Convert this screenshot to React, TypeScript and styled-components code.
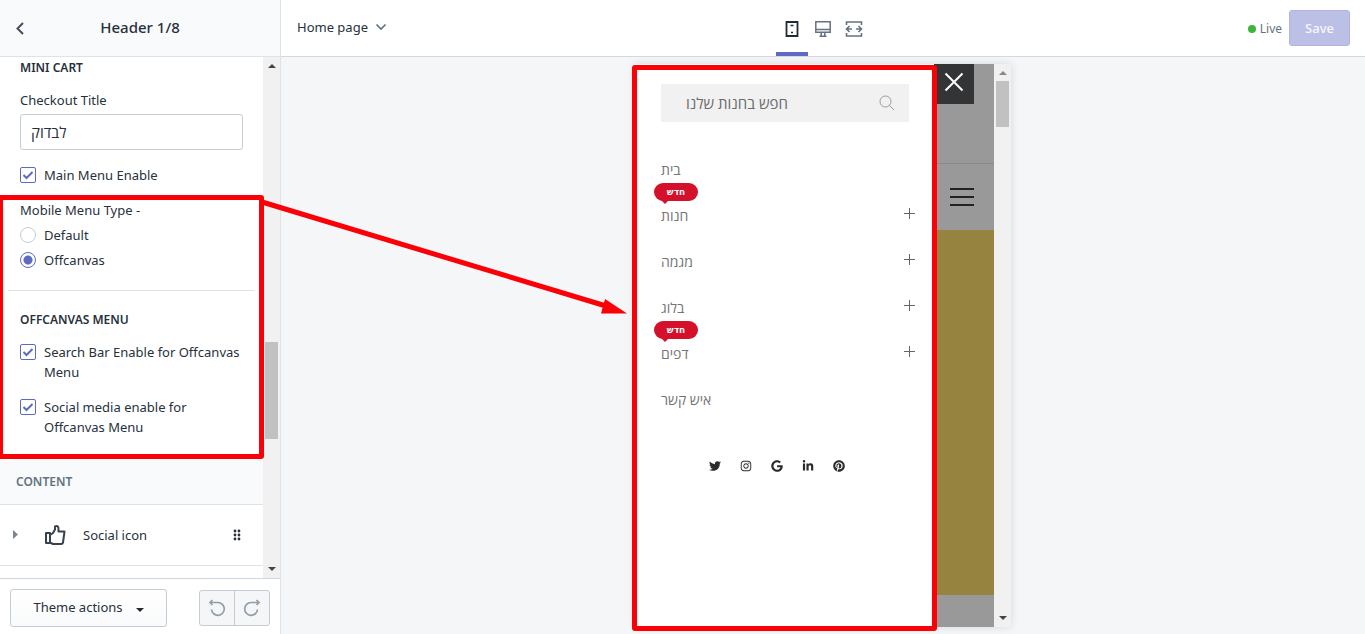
import React from 'react';
import styled, { createGlobalStyle } from 'styled-components';
import { FaTwitter, FaInstagram, FaGoogle, FaLinkedinIn, FaPinterest } from 'react-icons/fa';

const GlobalStyle = createGlobalStyle`
  *, *::before, *::after { box-sizing: border-box; }
  body {
    margin: 0;
    background: #f4f6f8;
    color: #27313c;
    font-family: 'Noto Sans', 'Open Sans', sans-serif;
    font-size: 13px;
    line-height: 20px;
  }
  button, input { font: inherit; color: inherit; margin: 0; }
  button { cursor: pointer; }
  svg { display: block; }
`;

const Shell = styled.div`
  position: relative;
  display: flex;
  height: 100vh;
  overflow: hidden;
`;

/* ---------- Sidebar ---------- */

const Sidebar = styled.aside`
  display: flex;
  flex-direction: column;
  flex: none;
  width: 281px;
  background: #fff;
  border-right: 1px solid #dfe3e8;
`;

const SidebarHeader = styled.header`
  display: grid;
  grid-template-columns: 40px 1fr 40px;
  align-items: center;
  flex: none;
  height: 57px;
  background: #f9fafb;
  border-bottom: 1px solid #dfe3e8;
`;

const SidebarTitle = styled.h1`
  margin: 0;
  padding-bottom: 2px;
  font-size: 15px;
  font-weight: 500;
  text-align: center;
`;

const BackButton = styled.button`
  display: flex;
  justify-content: center;
  padding: 4px 0;
  border: 0;
  background: none;
`;

const ScrollArea = styled.div`
  display: flex;
  flex: 1;
  min-height: 0;
  overflow: hidden;
`;

const Settings = styled.div`
  flex: 1;
  min-width: 0;
  padding-top: 1px;
`;

const Section = styled.section`
  display: flex;
  flex-direction: column;
  padding: 0 20px;
`;

const SectionTitle = styled.h2`
  margin: 0;
  font-size: 12px;
  font-weight: 600;
  line-height: 20px;
  text-transform: uppercase;
`;

const FieldLabel = styled.label`
  margin-top: 12px;
`;

const TextField = styled.input`
  width: 100%;
  height: 36px;
  margin: 4px 0 15px;
  padding: 0 10px;
  border: 1px solid #c4cdd5;
  border-radius: 3px;
  background: #fff;
  font-size: 15px;
`;

const Highlighted = styled.div`
  position: relative;
  margin-top: 15px;
  padding-bottom: 22px;
`;

const Highlight = styled.div<{ $left: number; $right: number; $top: number; $bottom: number }>`
  position: absolute;
  z-index: 2;
  top: ${(p) => p.$top}px;
  right: ${(p) => p.$right}px;
  bottom: ${(p) => p.$bottom}px;
  left: ${(p) => p.$left}px;
  border: 5px solid #fb0007;
  border-radius: 3px;
  pointer-events: none;
`;

const Choice = styled.label`
  display: flex;
  align-items: flex-start;
  gap: 8px;
`;

const ChoiceControl = styled.span`
  position: relative;
  flex: none;
  width: 16px;
  height: 16px;
  margin-top: 2px;

  svg {
    position: absolute;
    inset: 0;
    pointer-events: none;
  }
`;

const ChoiceInput = styled.input`
  display: block;
  appearance: none;
  width: 16px;
  height: 16px;
  border: 1px solid #c4cdd5;
  border-radius: ${(p) => (p.type === 'radio' ? '8px' : '2px')};
  background: #fff;

  &:checked {
    border-color: #5c6ac4;
  }
  &[type='radio']:checked {
    background: radial-gradient(circle, #5c6ac4 4px, #fff 5px);
  }
  &:not(:checked) + svg {
    display: none;
  }
`;

const RadioGroup = styled.fieldset`
  display: flex;
  flex-direction: column;
  gap: 5px;
  margin: 0;
  padding: 0;
  border: 0;

  legend {
    margin-bottom: 5px;
    padding: 0;
  }
`;

const Divider = styled.hr`
  width: calc(100% - 16px);
  margin: 20px 8px 19px;
  border: 0;
  border-top: 1px solid #dfe3e8;
`;

const ChoiceList = styled.div`
  display: flex;
  flex-direction: column;
  gap: 15px;
  margin: 12px -3px 0 0;
`;

const ContentHeading = styled.h2`
  margin: 0;
  padding: 13px 16px 12px;
  border-bottom: 1px solid #dfe3e8;
  background: #f9fafb;
  color: #637381;
  font-size: 12px;
  font-weight: 600;
  line-height: 20px;
`;

const BlockRow = styled.div`
  display: flex;
  align-items: center;
  height: 61px;
  padding: 0 20px 0 12px;
  border-bottom: 1px solid #dfe3e8;
`;

const BlockName = styled.span`
  flex: 1;
  margin-left: 17px;
`;

const IconButton = styled.button`
  display: flex;
  padding: 0;
  border: 0;
  background: none;
`;

const BlockIcon = styled.span`
  margin-left: 24px;
`;

const Scrollbar = styled.div`
  display: flex;
  flex-direction: column;
  align-items: center;
  flex: none;
  width: 17px;
  padding: 7px 0;
  background: #f1f1f1;
`;

const Thumb = styled.div<{ $before: number; $size: number }>`
  width: 13px;
  height: ${(p) => p.$size}px;
  margin-top: ${(p) => p.$before}px;
  margin-bottom: auto;
  background: #c1c1c1;
`;

const SidebarFooter = styled.footer`
  display: flex;
  align-items: center;
  justify-content: space-between;
  flex: none;
  height: 56px;
  padding: 2px 10px 0;
  border-top: 1px solid #d0d6db;
`;

const ThemeActions = styled.button`
  display: flex;
  align-items: center;
  justify-content: center;
  gap: 13px;
  width: 157px;
  height: 38px;
  padding: 0 0 2px;
  border: 1px solid #c4cdd5;
  border-radius: 3px;
  background: linear-gradient(#fff, #f9fafb);

  svg { margin-top: 6px; }
`;

const History = styled.div`
  display: flex;
  border: 1px solid #c4cdd5;
  border-radius: 3px;
  background: #f4f6f8;
`;

const HistoryButton = styled.button`
  display: flex;
  align-items: center;
  justify-content: center;
  width: 34px;
  height: 34px;
  padding: 0;
  border: 0;
  background: none;

  & + & {
    width: 35px;
    border-left: 1px solid #c4cdd5;
  }
`;

/* ---------- Editor ---------- */

const Editor = styled.main`
  display: flex;
  flex-direction: column;
  flex: 1;
  min-width: 0;
`;

const Toolbar = styled.header`
  display: grid;
  grid-template-columns: 1fr auto 1fr;
  flex: none;
  height: 57px;
  padding: 0 15px 0 16px;
  border-bottom: 1px solid #d5d9dd;
  background: #fff;
`;

const PagePicker = styled.button`
  display: flex;
  align-items: center;
  gap: 7px;
  justify-self: start;
  height: 54px;
  padding: 0;
  border: 0;
  background: none;
`;

const Devices = styled.nav`
  display: flex;
  margin-right: 2px;
`;

const DeviceButton = styled.button<{ $active?: boolean }>`
  display: flex;
  align-items: center;
  justify-content: center;
  width: ${(p) => (p.$active ? 32 : 31)}px;
  padding: 6px 0 0;
  border: 0;
  border-bottom: 4px solid ${(p) => (p.$active ? '#5c6ac4' : 'transparent')};
  background: none;
  color: ${(p) => (p.$active ? '#212b36' : '#637381')};
`;

const Actions = styled.div`
  display: flex;
  align-items: center;
  justify-content: flex-end;
  gap: 7px;
`;

const Status = styled.span`
  display: flex;
  align-items: center;
  gap: 4px;
  padding-top: 1px;
  color: #637381;
  font-size: 12px;

  &::before {
    content: '';
    width: 8px;
    height: 8px;
    border-radius: 4px;
    background: #3fb53c;
  }
`;

const SaveButton = styled.button`
  width: 61px;
  height: 36px;
  padding: 0;
  border: 1px solid #b0b4de;
  border-radius: 3px;
  background: #bcc0e6;
  color: #f7f7fd;
  font-size: 13px;
  font-weight: 500;
`;

const Stage = styled.div`
  display: flex;
  justify-content: center;
  flex: 1;
  min-height: 0;
  padding: 7px 0;
`;

const Phone = styled.div`
  position: relative;
  display: flex;
  width: 376px;
  box-shadow: 0 0 8px rgba(33, 43, 54, 0.14);
`;

const Offcanvas = styled.div`
  flex: 1;
  min-width: 0;
  padding: 20px 19px 0 26px;
  background: #fff;
  color: #747474;
  font-family: 'Open Sans', 'Noto Sans', sans-serif;
`;

const SearchBox = styled.form`
  display: flex;
  align-items: center;
  height: 38px;
  margin-right: 6px;
  padding: 0 14px 0 25px;
  background: #f1f1f1;
`;

const SearchInput = styled.input`
  flex: 1;
  min-width: 0;
  padding: 0;
  border: 0;
  background: none;
  font-size: 15px;

  &::placeholder {
    color: #6b6b6b;
    opacity: 1;
  }
`;

const Menu = styled.ul`
  margin: 25px 0 0;
  padding: 0;
  list-style: none;
`;

const MenuItem = styled.li`
  position: relative;
  display: flex;
  align-items: center;
  justify-content: space-between;
  height: 46px;
`;

const MenuLink = styled.a`
  color: inherit;
  font-size: 14px;
  text-decoration: none;
`;

const Expand = styled(IconButton)`
  margin-bottom: 6px;
`;

const Badge = styled.span`
  position: absolute;
  top: -10px;
  left: -7px;
  width: 44px;
  height: 18px;
  border-radius: 9px;
  background: #d5102b;
  color: #fff;
  font-family: 'DejaVu Sans', sans-serif;
  font-size: 9px;
  font-weight: 700;
  line-height: 18px;
  text-align: center;

  &::after {
    content: '';
    position: absolute;
    top: 17px;
    left: 7px;
    border: 4px solid transparent;
    border-top-color: #d5102b;
    border-bottom: 0;
  }
`;

const Socials = styled.nav`
  display: flex;
  justify-content: center;
  gap: 19px;
  margin: 37px 22px 0 0;
  color: #2b2b2b;

  a { color: inherit; }
`;

const Underlay = styled.div`
  display: flex;
  flex-direction: column;
  flex: none;
  width: 60px;
  background: #999;
`;

const CloseButton = styled.button`
  display: flex;
  align-items: center;
  justify-content: center;
  flex: none;
  width: 40px;
  height: 40px;
  padding: 0 0 4px;
  border: 0;
  background: #333436;
`;

const StoreBar = styled.div`
  display: flex;
  align-items: center;
  flex: none;
  height: 67px;
  margin-top: 59px;
  padding-left: 16px;
  border-top: 1px solid #8a8a8a;
`;

const Banner = styled.div`
  flex: 1;
  margin-bottom: 32px;
  background: #95833f;
`;

const Arrow = styled.svg`
  position: absolute;
  z-index: 3;
  top: 195px;
  left: 260px;
  pointer-events: none;
`;

/* ---------- Pieces ---------- */

function Caret({ up, color = '#444' }: { up?: boolean; color?: string }) {
  return (
    <svg width="8" height="4" viewBox="0 0 8 4" fill={color}>
      <path d={up ? 'M0 4 4 0l4 4z' : 'M0 0h8L4 4z'} />
    </svg>
  );
}

function Checkbox({ children }: { children: React.ReactNode }) {
  return (
    <Choice>
      <ChoiceControl>
        <ChoiceInput type="checkbox" defaultChecked />
        <svg width="16" height="16" viewBox="0 0 16 16" fill="none" stroke="#5c6ac4" strokeWidth="2">
          <path d="M3.500 8 6.500 11 12.500 5" />
        </svg>
      </ChoiceControl>
      {children}
    </Choice>
  );
}

function Radio({ label, checked }: { label: string; checked?: boolean }) {
  return (
    <Choice>
      <ChoiceControl>
        <ChoiceInput type="radio" name="mobile-menu" defaultChecked={checked} />
      </ChoiceControl>
      {label}
    </Choice>
  );
}

const menuItems = [
  { name: 'בית' },
  { name: 'חנות', badge: true, nested: true },
  { name: 'מגמה', nested: true },
  { name: 'בלוג', nested: true },
  { name: 'דפים', badge: true, nested: true },
  { name: 'איש קשר' },
];

const socials = [
  { name: 'Twitter', Icon: FaTwitter },
  { name: 'Instagram', Icon: FaInstagram },
  { name: 'Google', Icon: FaGoogle },
  { name: 'LinkedIn', Icon: FaLinkedinIn },
  { name: 'Pinterest', Icon: FaPinterest },
];

export default function App() {
  return (
    <>
      <GlobalStyle />
      <Shell>
        <Sidebar>
          <SidebarHeader>
            <BackButton aria-label="Back">
              <svg width="10" height="14" viewBox="0 0 10 14" fill="none" stroke="#454f5b" strokeWidth="2">
                <path d="M8 2 2.500 7.500 8 13" />
              </svg>
            </BackButton>
            <SidebarTitle>Header 1/8</SidebarTitle>
          </SidebarHeader>

          <ScrollArea>
            <Settings>
              <Section>
                <SectionTitle>Mini cart</SectionTitle>
                <FieldLabel htmlFor="checkout-title">Checkout Title</FieldLabel>
                <TextField id="checkout-title" defaultValue="לבדוק" />
                <Checkbox>Main Menu Enable</Checkbox>
              </Section>
              <Highlighted>
                <Highlight $top={-5} $right={-1} $bottom={0} $left={-2} />
                <Section>
                  <RadioGroup>
                    <legend>Mobile Menu Type -</legend>
                    <Radio label="Default" />
                    <Radio label="Offcanvas" checked />
                  </RadioGroup>
                </Section>
                <Divider />
                <Section>
                  <SectionTitle>Offcanvas menu</SectionTitle>
                  <ChoiceList>
                    <Checkbox>Search Bar Enable for Offcanvas Menu</Checkbox>
                    <Checkbox>Social media enable for Offcanvas Menu</Checkbox>
                  </ChoiceList>
                </Section>
              </Highlighted>
              <ContentHeading>CONTENT</ContentHeading>
              <BlockRow>
                <IconButton aria-label="Expand Social icon">
                  <svg width="8" height="10" viewBox="0 0 8 10" fill="#7b8794">
                    <path d="M1 0 6 4.500 1 9z" />
                  </svg>
                </IconButton>
                <BlockIcon>
                  <svg width="22" height="22" viewBox="0 0 22 22" fill="none" stroke="#36424e" strokeWidth="2" strokeLinejoin="round">
                    <path d="M2 9h4v10H2zM6 11l3-2 2-3.500V2.500Q14.500 1 14.500 5v2.500h6L19 18.500q-.2 1.500-2 1.500H9l-3-1.500" />
                  </svg>
                </BlockIcon>
                <BlockName>Social icon</BlockName>
                <IconButton aria-label="Reorder Social icon">
                  <svg width="12" height="12" viewBox="0 0 12 12" fill="#27313c">
                    <circle cx="4" cy="2" r="1.400" />
                    <circle cx="8" cy="2" r="1.400" />
                    <circle cx="4" cy="6" r="1.400" />
                    <circle cx="8" cy="6" r="1.400" />
                    <circle cx="4" cy="10" r="1.400" />
                    <circle cx="8" cy="10" r="1.400" />
                  </svg>
                </IconButton>
              </BlockRow>
            </Settings>
            <Scrollbar>
              <Caret up />
              <Thumb $before={274} $size={97} />
              <Caret />
            </Scrollbar>
          </ScrollArea>

          <SidebarFooter>
            <ThemeActions>
              Theme actions
              <Caret color="#212b36" />
            </ThemeActions>
            <History>
              <HistoryButton aria-label="Undo">
                <svg width="18" height="18" viewBox="0 0 18 18" fill="none" stroke="#919eab" strokeWidth="1.700">
                  <path d="M4.500 1 2 3.500 4.500 6M2 3.500H10a6.400 6.400 0 1 1-6.500 7" />
                </svg>
              </HistoryButton>
              <HistoryButton aria-label="Redo">
                <svg width="18" height="18" viewBox="0 0 18 18" fill="none" stroke="#919eab" strokeWidth="1.700">
                  <path d="M13.500 1 16 3.500 13.500 6M16 3.500H8a6.400 6.400 0 1 0 6.500 7" />
                </svg>
              </HistoryButton>
            </History>
          </SidebarFooter>
        </Sidebar>

        <Editor>
          <Toolbar>
            <PagePicker>
              Home page
              <svg width="12" height="8" viewBox="0 0 12 8" fill="none" stroke="#637381" strokeWidth="1.700">
                <path d="M1.500 1.500 6 6l4.500-4.500" />
              </svg>
            </PagePicker>
            <Devices aria-label="Preview size">
              <DeviceButton $active aria-label="Mobile">
                <svg width="14" height="16" viewBox="0 0 14 16" fill="none" stroke="currentColor" strokeWidth="1.800">
                  <path d="M1.500 1h11v14h-11z" />
                  <path d="M5.500 4.500h3M6 11.500h2" strokeWidth="1.500" />
                </svg>
              </DeviceButton>
              <DeviceButton aria-label="Desktop">
                <svg width="16" height="16" viewBox="0 0 16 16" fill="none" stroke="currentColor" strokeWidth="1.500">
                  <path d="M.8.8h14.400v10.400H.8zM.8 8.500h14.400M6.200 11.500v3.500M9.800 11.500v3.500M4.500 15.200h7" />
                </svg>
              </DeviceButton>
              <DeviceButton aria-label="Full width">
                <svg width="18" height="16" viewBox="0 0 18 16" fill="none" stroke="currentColor" strokeWidth="1.600">
                  <path d="M1.500 4V1h15v3M1.500 12v3h15v-3M1.500 8H7M11 8h5.500M4.500 5 1.500 8l3 3M13.500 5l3 3-3 3" />
                </svg>
              </DeviceButton>
            </Devices>
            <Actions>
              <Status>Live</Status>
              <SaveButton>Save</SaveButton>
            </Actions>
          </Toolbar>

          <Stage>
            <Phone>
              <Offcanvas>
                <SearchBox role="search">
                  <SearchInput aria-label="חפש" placeholder="חפש בחנות שלנו" />
                  <IconButton type="button" aria-label="Search">
                    <svg width="16" height="16" viewBox="0 0 16 16" fill="none" stroke="#999">
                      <circle cx="6.500" cy="6.500" r="5.500" />
                      <path d="m10.500 10.500 4.500 4.500" />
                    </svg>
                  </IconButton>
                </SearchBox>
                <Menu>
                  {menuItems.map((item) => (
                    <MenuItem key={item.name}>
                      <MenuLink href="#">{item.name}</MenuLink>
                      {item.badge && <Badge>חדש</Badge>}
                      {item.nested && (
                        <Expand aria-label={`Expand ${item.name}`}>
                          <svg width="11" height="11" viewBox="0 0 11 11" stroke="#666">
                            <path d="M5.500 0v11M0 5.500h11" />
                          </svg>
                        </Expand>
                      )}
                    </MenuItem>
                  ))}
                </Menu>
                <Socials aria-label="Social media">
                  {socials.map(({ name, Icon }) => (
                    <a key={name} href="#" aria-label={name}>
                      <Icon size={12} />
                    </a>
                  ))}
                </Socials>
              </Offcanvas>
              <Underlay>
                <CloseButton aria-label="Close menu">
                  <svg width="20" height="20" viewBox="0 0 20 20" stroke="#fff" strokeWidth="2">
                    <path d="m1.500 1.500 17 17M18.500 1.500l-17 17" />
                  </svg>
                </CloseButton>
                <StoreBar>
                  <IconButton aria-label="Menu">
                    <svg width="24" height="20" viewBox="0 0 24 20" stroke="#222" strokeWidth="2">
                      <path d="M0 2h24M0 10h24M0 18h24" />
                    </svg>
                  </IconButton>
                </StoreBar>
                <Banner />
              </Underlay>
              <Scrollbar>
                <Caret up color="#8a8a8a" />
                <Thumb $before={6} $size={46} />
                <Caret />
              </Scrollbar>
              <Highlight $top={1} $right={74} $bottom={-4} $left={-3} />
            </Phone>
          </Stage>
        </Editor>

        <Arrow width="368" height="122" viewBox="0 0 368 122" fill="#fb0007">
          <path d="M2 7 346 111" stroke="#fb0007" strokeWidth="5" />
          <path d="m345 104 22 14.500h-26z" />
        </Arrow>
      </Shell>
    </>
  );
}
